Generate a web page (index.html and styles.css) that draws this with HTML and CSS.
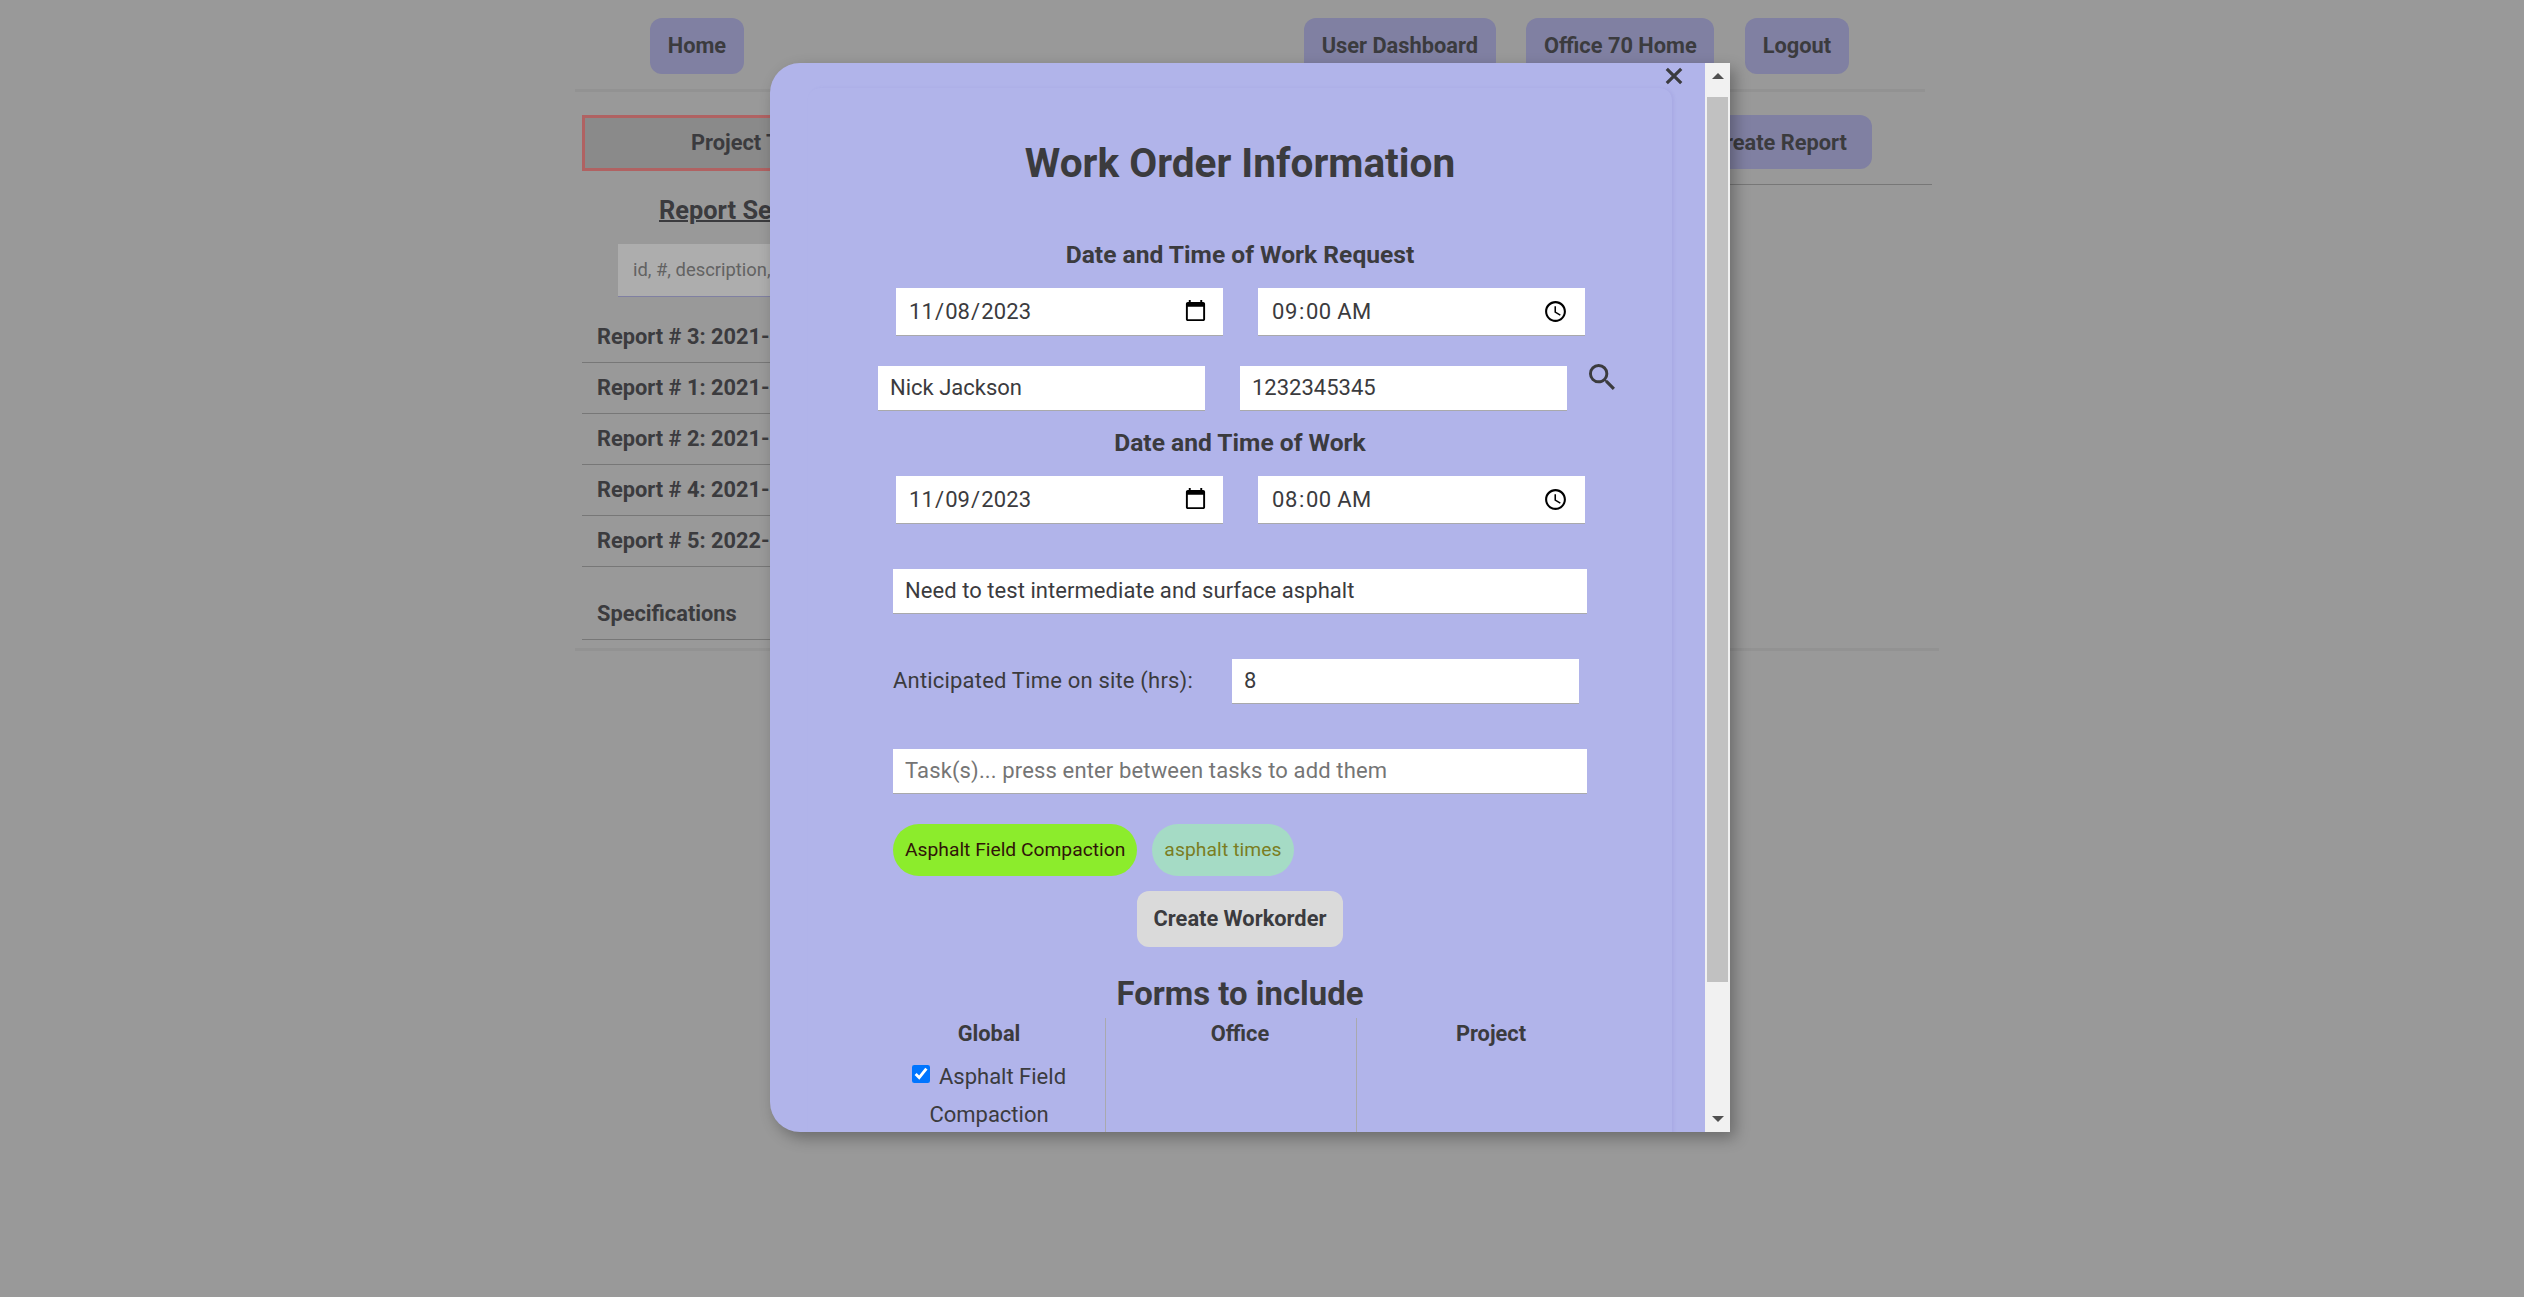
FILE: index.html
```html
<!DOCTYPE html>
<html lang="en">
<head>
<meta charset="utf-8">
<title>Work Order Information</title>
<link rel="stylesheet" href="styles.css">
</head>
<body>
<header class="nav">
  <a class="btn">Home</a>
  <nav class="nav-right">
    <a class="btn">User Dashboard</a>
    <a class="btn">Office 70 Home</a>
    <a class="btn">Logout</a>
  </nav>
</header>
<div class="rule rule-top"></div>
<main class="project">
  <section class="side">
    <div class="project-title">Project Title</div>
    <h3 class="search-title">Report Search</h3>
    <input class="search" type="text" placeholder="id, #, description, date">
    <ul class="reports">
      <li>Report # 3: 2021-</li>
      <li>Report # 1: 2021-</li>
      <li>Report # 2: 2021-</li>
      <li>Report # 4: 2021-</li>
      <li>Report # 5: 2022-</li>
      <li class="specs">Specifications</li>
    </ul>
  </section>
  <section class="detail">
    <a class="btn btn-report">Create Report</a>
  </section>
</main>
<div class="rule rule-bottom"></div>

<div class="modal">
  <div class="modal-body">
    <button class="close" aria-label="Close"><svg viewBox="0 0 18 18" width="18" height="18"><path d="M1.8 1.8 16.2 16.2M16.2 1.8 1.8 16.2"/></svg></button>
    <form class="card">
      <h1 class="title">Work Order Information</h1>
      <h2 class="sub">Date and Time of Work Request</h2>
      <div class="row when">
        <input class="field" type="date" value="2023-11-08">
        <input class="field" type="time" value="09:00">
      </div>
      <div class="row contact">
        <input class="field" type="text" value="Nick Jackson">
        <input class="field" type="text" value="1232345345">
        <svg class="lookup" viewBox="3 3 17.5 17.5" width="26" height="26"><path d="M15.5 14h-.79l-.28-.27A6.47 6.47 0 0 0 16 9.5 6.5 6.5 0 1 0 9.5 16c1.61 0 3.09-.59 4.23-1.57l.27.28v.79l5 4.99L20.49 19l-4.99-5zm-6 0C7.01 14 5 11.99 5 9.5S7.01 5 9.5 5 14 7.01 14 9.5 11.99 14 9.5 14z"/></svg>
      </div>
      <h2 class="sub sub-work">Date and Time of Work</h2>
      <div class="row when">
        <input class="field" type="date" value="2023-11-09">
        <input class="field" type="time" value="08:00">
      </div>
      <input class="field wide" type="text" value="Need to test intermediate and surface asphalt">
      <div class="row hours">
        <label for="hours">Anticipated Time on site (hrs):</label>
        <input class="field" id="hours" type="text" value="8">
      </div>
      <input class="field wide task" type="text" placeholder="Task(s)... press enter between tasks to add them">
      <div class="row pills">
        <span class="pill">Asphalt Field Compaction</span>
        <span class="pill pill-soft">asphalt times</span>
      </div>
      <button class="btn btn-create" type="button">Create Workorder</button>
      <h2 class="forms-title">Forms to include</h2>
      <div class="forms">
        <div class="forms-col">
          <h4>Global</h4>
          <label class="check"><input type="checkbox" checked>Asphalt Field Compaction</label>
        </div>
        <div class="forms-col"><h4>Office</h4></div>
        <div class="forms-col"><h4>Project</h4></div>
      </div>
    </form>
  </div>
  <div class="scrollbar">
    <span class="arrow arrow-up"></span>
    <span class="thumb"></span>
    <span class="arrow arrow-down"></span>
  </div>
</div>
</body>
</html>
```
FILE: styles.css
```css
* { box-sizing: border-box; }

body {
  margin: 0;
  height: 1297px;
  overflow: hidden;
  background: #999;
  color: #3b3b3e;
  font: 400 22px Roboto, "Liberation Sans", sans-serif;
}

h1, h2, h3, h4, ul { margin: 0; padding: 0; font-weight: 700; list-style: none; }
input, button { font: inherit; color: inherit; margin: 0; border: 0; border-radius: 0; outline: 0; }

/* page behind the dialog */
.nav {
  display: flex;
  justify-content: space-between;
  padding: 18px 675px 15px 650px;
}
.nav-right { display: flex; gap: 30.5px; }
.btn {
  height: 56px;
  padding: 0 17.8px;
  border-radius: 12px;
  background: #8080a2;
  font-size: 21.8px;
  font-weight: 700;
  line-height: 55px;
  text-align: center;
  white-space: nowrap;
}
.rule { height: 3px; margin-left: 575px; background: #929292; }
.rule-top { width: 1350px; }
.rule-bottom { width: 1364px; margin-top: 8px; }
.project {
  display: flex;
  justify-content: space-between;
  align-items: flex-start;
  margin: 23px 592px 0 582px;
}
.side { width: 342px; }
.project-title {
  height: 56px;
  border: 3px solid #b06262;
  background: #8a8a8a;
  font-size: 21.8px;
  font-weight: 700;
  line-height: 50px;
  padding-left: 106px;
}
.search-title {
  margin-top: 22px;
  padding-left: 77px;
  font-size: 25.4px;
  line-height: 34px;
  text-decoration: underline;
  text-decoration-thickness: 2px;
}
.search {
  display: block;
  width: 270px;
  height: 53px;
  margin: 17px 0 0 36px;
  padding: 0 15px 1px;
  background: #adadad;
  border-bottom: 1px solid #8080a2;
  font-size: 18.4px;
}
.search::placeholder { color: #626262; }
.reports { margin-top: 15px; }
.reports li {
  height: 51px;
  padding-left: 15px;
  border-bottom: 1px solid #777;
  font-size: 21.8px;
  font-weight: 700;
  line-height: 49px;
}
.reports .specs { margin-top: 22px; }
.detail {
  display: flex;
  justify-content: flex-end;
  width: 900px;
  padding: 0 60px 15px 0;
  border-bottom: 1px solid #777;
}
.btn-report { height: 54px; padding: 0 25px; }

/* dialog */
.modal {
  position: absolute;
  left: 770px;
  top: 63px;
  display: flex;
  width: 960px;
  height: 1069px;
  border-radius: 30px 0 0 30px;
  background: #b1b4ea;
  box-shadow: 5px 6px 15px rgba(0, 0, 0, .3);
  overflow: hidden;
}
.modal-body { position: relative; width: 935px; overflow: hidden; padding: 25px 33px 0 38px; }
.close {
  position: absolute;
  left: 895px;
  top: 4px;
  width: 18px;
  height: 18px;
  padding: 0;
  background: none;
}
.close svg { display: block; fill: none; stroke: #3b3b3e; stroke-width: 3.2; }
.card {
  display: flex;
  flex-direction: column;
  align-items: center;
  height: 1300px;
  padding-top: 50px;
  border-radius: 12px;
  box-shadow: 2px 0 3px rgba(120, 110, 200, .14);
}
.title { font-size: 40.6px; line-height: 50px; }
.sub { margin: 52px 0 18px; font-size: 24.6px; line-height: 30px; }
.sub-work { margin-top: 17px; }
.row { display: flex; }
.field {
  flex: none;
  width: 327px;
  height: 45px;
  padding: 0 12px 2px;
  border-bottom: 1px solid #a9a9ab;
  background: #fff;
}
.when { gap: 35px; }
.when .field { height: 48px; padding: 0 15px 0 12.5px; letter-spacing: .1px; }
.when .field[type="time"] { padding: 0 17px 0 13.5px; letter-spacing: .6px; }
.field::-webkit-calendar-picker-indicator { width: 25px; height: 25px; padding: 0; margin-right: 0; }
.contact { width: 724px; margin-top: 30px; gap: 35px; }
.lookup { flex: none; margin: -2px 0 0 -13px; fill: #3b3b3e; }
.wide { width: 694px; margin-top: 45px; letter-spacing: .05px; }
.task { letter-spacing: .14px; }
.task::placeholder { color: #757575; }
.hours { width: 694px; margin-top: 45px; }
.hours label { width: 339px; line-height: 43px; letter-spacing: .19px; }
.hours .field { width: 347px; }
.pills { width: 694px; margin-top: 30px; gap: 15px; }
.pill {
  height: 52px;
  padding: 0 12px;
  border-radius: 26px;
  background: #8cec2c;
  color: #301508;
  font-size: 19.25px;
  line-height: 52px;
}
.pill-soft { background: #a5dbc5; color: #7a7d22; letter-spacing: .1px; }
.btn-create { margin-top: 15px; padding: 0 16.8px; background: #dadada; line-height: 54px; }
.forms-title { margin-top: 27px; font-size: 32.9px; line-height: 40px; }
.forms { display: flex; gap: 19px; margin: 4px 0 0 1px; height: 300px; }
.forms-col { width: 232px; border-right: 1px solid #a9a9ae; text-align: center; }
.forms-col:last-child { border-color: transparent; }
.forms-col h4 { font-size: 21.8px; line-height: 31px; }
.check { display: block; width: 180px; margin: 9px auto 0; line-height: 38px; }
.check input { width: 18px; height: 18px; margin: 0 9px 0 0; vertical-align: 1px; }

/* scrollbar */
.scrollbar {
  display: flex;
  flex-direction: column;
  align-items: center;
  width: 25px;
  background: #f1f1f1;
}
.arrow { width: 0; height: 0; border: 6px solid transparent; }
.arrow-up { margin-top: 10px; border-top: 0; border-bottom-color: #505050; }
.arrow-down { margin-top: 134px; border-bottom: 0; border-top-color: #505050; }
.thumb { width: 21px; height: 885px; margin-top: 18px; background: #c1c1c1; }
```
